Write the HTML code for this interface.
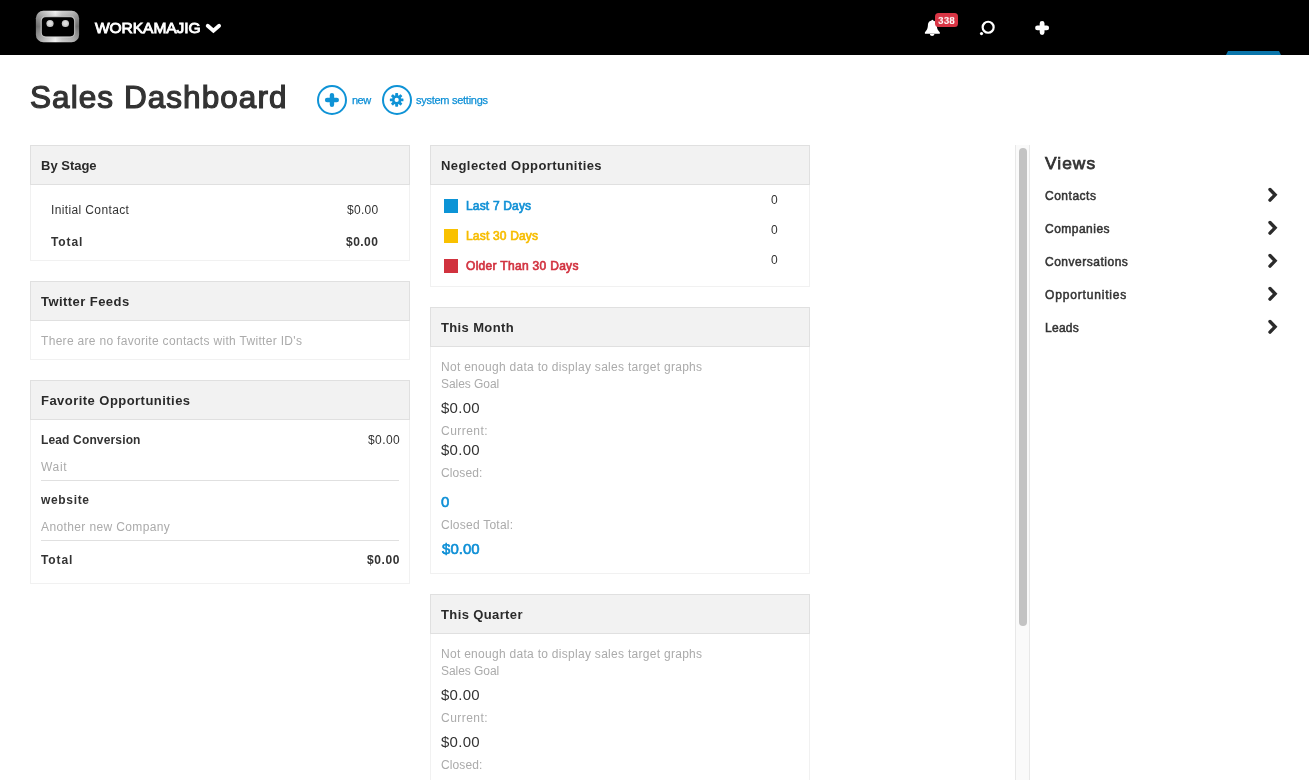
<!DOCTYPE html>
<html>
<head>
<meta charset="utf-8">
<title>Sales Dashboard</title>
<style>
*{box-sizing:border-box;margin:0;padding:0}
html,body{width:1309px;height:780px;overflow:hidden;background:#fff}
body{font-family:"Liberation Sans",sans-serif;font-size:12px;color:#333;position:relative}
.abs{position:absolute;white-space:nowrap}
#topbar{position:absolute;left:0;top:0;width:1309px;height:55px;background:#000}
.circ{position:absolute;width:30px;height:30px;border:2px solid #0f93d6;border-radius:50%}
.panel{position:absolute;width:380px}
.ph{position:absolute;left:0;top:0;width:380px;height:40px;background:#f2f2f2;border:1px solid #e0e0e0}
.pb{position:absolute;left:0;top:40px;width:380px;border:1px solid #f1f1f1;border-top:none}
.t{position:absolute;white-space:nowrap;font-family:"Liberation Sans",sans-serif;will-change:transform}
.hr{position:absolute;height:1px;background:#e0e0e0}
.chev{position:absolute;left:1266px;width:13px;height:16px}
.sq{position:absolute;left:444px;width:14px;height:14px}
</style>
</head>
<body>
<div id="topbar"></div>
<!-- logo -->
<svg class="abs" style="left:30px;top:5px" width="56" height="44" viewBox="0 0 56 44">
<defs>
<linearGradient id="lg1" x1="0" y1="0" x2="1" y2="0">
<stop offset="0" stop-color="#8a8a8a"/><stop offset="0.18" stop-color="#b2b2b2"/><stop offset="0.45" stop-color="#f2f2f2"/><stop offset="0.6" stop-color="#c4c4c4"/><stop offset="0.85" stop-color="#a8a8a8"/><stop offset="1" stop-color="#888888"/>
</linearGradient>
<linearGradient id="lg2" x1="0" y1="0" x2="0" y2="1">
<stop offset="0" stop-color="#ffffff" stop-opacity="0.25"/><stop offset="0.5" stop-color="#000000" stop-opacity="0.22"/><stop offset="1" stop-color="#ffffff" stop-opacity="0.15"/>
</linearGradient>
</defs>
<rect x="5.9" y="5.7" width="43.2" height="31.5" rx="7.5" ry="7.5" fill="url(#lg1)"/>
<rect x="5.9" y="5.7" width="43.2" height="31.5" rx="7.5" ry="7.5" fill="url(#lg2)"/>
<rect x="11.3" y="11.6" width="33.3" height="20.3" rx="4.4" ry="4.4" fill="#000" stroke="#e4e4e4" stroke-opacity="0.7" stroke-width="1.1"/>
<circle cx="20" cy="18.5" r="3.6" fill="#c8c8c8"/>
<circle cx="20" cy="18.3" r="2.2" fill="#dedede"/>
<circle cx="35.4" cy="18.5" r="3.6" fill="#c8c8c8"/>
<circle cx="35.4" cy="18.3" r="2.2" fill="#dedede"/>
</svg>
<svg class="abs" style="left:205px;top:22px" width="18" height="13" viewBox="0 0 18 13"><path d="M2.7 3.7 L8.4 8.7 L14.1 3.7" fill="none" stroke="#fff" stroke-width="3.8" stroke-linecap="round" stroke-linejoin="miter"/></svg>
<!-- bell -->
<svg class="abs" style="left:920px;top:16px" width="26" height="24" viewBox="0 0 26 24"><path d="M12.35 3.7 C11.9 3.7 11.6 4.0 11.5 4.4 C10.0 4.8 8.3 5.8 8.0 8.0 C7.8 11.5 7.6 13.6 4.9 16.2 L4.9 17.7 L19.8 17.7 L19.8 16.2 C17.1 13.6 16.9 11.5 16.7 8.0 C16.4 5.8 14.7 4.8 13.2 4.4 C13.1 4.0 12.8 3.7 12.35 3.7 Z M9.9 18.1 C9.9 19.4 11 20.1 12.1 20.1 C13.3 20.1 14.4 19.4 14.4 18.1 Z" fill="#fff"/></svg>
<div class="abs" style="left:935px;top:13px;width:23px;height:14px;border-radius:3.5px;background:#d93545"></div>
<div class="t" style="left:938px;top:14px;font-size:10px;line-height:14px;font-weight:bold;color:#fff;letter-spacing:0.1px;transform:scaleY(0.9);transform-origin:0 10.5px">338</div>
<!-- search -->
<svg class="abs" style="left:976px;top:16px" width="24" height="24" viewBox="0 0 24 24"><circle cx="12.15" cy="11.25" r="5.5" fill="none" stroke="#fff" stroke-width="2.2"/><circle cx="5.5" cy="17.6" r="1.6" fill="#fff"/></svg>
<!-- plus -->
<svg class="abs" style="left:1032px;top:18px" width="20" height="20" viewBox="0 0 20 20"><path d="M10.1 5.3 V14.5 M5.5 9.9 H14.7" stroke="#fff" stroke-width="4.8" stroke-linecap="round" fill="none"/></svg>
<!-- blue tab -->
<svg class="abs" style="left:1224px;top:50px" width="60" height="5" viewBox="0 0 60 5"><path d="M2 5 L4 1 L55 1 L57 5 Z" fill="#0a75aa"/></svg>

<div class="circ" style="left:317px;top:85px"></div>
<svg class="abs" style="left:322px;top:90px" width="20" height="20" viewBox="0 0 20 20"><path d="M9.95 5.1 V14.8 M5.1 9.95 H14.8" stroke="#0f93d6" stroke-width="4.4" stroke-linecap="round" fill="none"/></svg>
<div class="circ" style="left:382px;top:85px"></div>
<svg class="abs" style="left:387px;top:90px" width="20" height="20" viewBox="0 0 20 20">
<g transform="translate(9.65 9.9)" fill="#0f93d6">
<circle r="4.6"/>
<rect x="-1.45" y="-6.8" width="2.9" height="13.6" rx="0.6"/><rect x="-1.45" y="-6.8" width="2.9" height="13.6" rx="0.6" transform="rotate(45)"/><rect x="-1.45" y="-6.8" width="2.9" height="13.6" rx="0.6" transform="rotate(90)"/><rect x="-1.45" y="-6.8" width="2.9" height="13.6" rx="0.6" transform="rotate(135)"/>
<circle r="2.1" fill="#fff"/>
</g></svg>

<!-- LEFT COLUMN -->
<div class="panel" style="left:30px;top:145px"><div class="ph"></div><div class="pb" style="height:76px"></div></div>
<div class="panel" style="left:30px;top:281px"><div class="ph"></div><div class="pb" style="height:39px"></div></div>
<div class="panel" style="left:30px;top:380px"><div class="ph"></div><div class="pb" style="height:164px"></div></div>
<div class="hr" style="left:41px;top:480px;width:358px"></div>
<div class="hr" style="left:41px;top:540px;width:358px"></div>

<!-- MIDDLE COLUMN -->
<div class="panel" style="left:430px;top:145px"><div class="ph"></div><div class="pb" style="height:102px"></div></div>
<div class="sq" style="top:199px;background:#0c94d6"></div>
<div class="sq" style="top:229px;background:#f9c100"></div>
<div class="sq" style="top:259px;background:#d1323e"></div>
<div class="panel" style="left:430px;top:307px"><div class="ph"></div><div class="pb" style="height:227px"></div></div>
<div class="panel" style="left:430px;top:594px"><div class="ph"></div><div class="pb" style="height:160px;border-bottom:none"></div></div>

<!-- SCROLLBAR -->
<div class="abs" style="left:1015px;top:145px;width:15px;height:635px;background:#fafafa;border-left:1px solid #e8e8e8;border-right:1px solid #e8e8e8"></div>
<div class="abs" style="left:1019px;top:148px;width:8px;height:478px;border-radius:4px;background:#c3c3c3"></div>

<!-- VIEWS chevrons -->
<svg class="chev" style="top:187px" viewBox="0 0 13 16"><path d="M4 2.55 L9.1 7.85 L4 13.15" fill="none" stroke="#2b2b2b" stroke-width="3.4" stroke-linecap="round"/></svg>
<svg class="chev" style="top:220px" viewBox="0 0 13 16"><path d="M4 2.55 L9.1 7.85 L4 13.15" fill="none" stroke="#2b2b2b" stroke-width="3.4" stroke-linecap="round"/></svg>
<svg class="chev" style="top:253px" viewBox="0 0 13 16"><path d="M4 2.55 L9.1 7.85 L4 13.15" fill="none" stroke="#2b2b2b" stroke-width="3.4" stroke-linecap="round"/></svg>
<svg class="chev" style="top:286px" viewBox="0 0 13 16"><path d="M4 2.55 L9.1 7.85 L4 13.15" fill="none" stroke="#2b2b2b" stroke-width="3.4" stroke-linecap="round"/></svg>
<svg class="chev" style="top:319px" viewBox="0 0 13 16"><path d="M4 2.55 L9.1 7.85 L4 13.15" fill="none" stroke="#2b2b2b" stroke-width="3.4" stroke-linecap="round"/></svg>

<!-- TEXT -->
<div class="t" id="brand" style="left:95px;top:17px;font-size:15.55px;line-height:22px;-webkit-text-stroke:0.9px #ffffff;color:#ffffff;letter-spacing:-0.071px">WORKAMAJIG</div>
<div class="t" id="title" style="left:30px;top:75px;font-size:31.52px;line-height:44px;-webkit-text-stroke:1.2px #333333;color:#333333;letter-spacing:1.052px">Sales Dashboard</div>
<div class="t" id="lnew" style="left:352px;top:93px;font-size:11px;line-height:15px;-webkit-text-stroke:0.25px #0d8fd6;color:#0d8fd6;letter-spacing:-0.504px">new</div>
<div class="t" id="lsys" style="left:416px;top:93px;font-size:11px;line-height:15px;-webkit-text-stroke:0.25px #0d8fd6;color:#0d8fd6;letter-spacing:-0.272px">system settings</div>
<div class="t" id="h1" style="left:41px;top:157px;font-size:13px;line-height:18px;font-weight:bold;color:#2a2a2a;letter-spacing:-0.004px">By Stage</div>
<div class="t" id="a1" style="left:51px;top:202px;font-size:12px;line-height:17px;color:#333333;letter-spacing:0.370px">Initial Contact</div>
<div class="t" id="a2" style="left:347px;top:202px;font-size:12px;line-height:17px;color:#333333;letter-spacing:0.302px">$0.00</div>
<div class="t" id="a3" style="left:51px;top:234px;font-size:12px;line-height:17px;font-weight:bold;color:#333333;letter-spacing:0.870px">Total</div>
<div class="t" id="a4" style="left:346px;top:234px;font-size:12px;line-height:17px;font-weight:bold;color:#333333;letter-spacing:0.480px">$0.00</div>
<div class="t" id="h2" style="left:41px;top:293px;font-size:13px;line-height:18px;font-weight:bold;color:#2a2a2a;letter-spacing:0.442px">Twitter Feeds</div>
<div class="t" id="b1" style="left:41px;top:333px;font-size:12px;line-height:17px;color:#ababab;letter-spacing:0.313px">There are no favorite contacts with Twitter ID's</div>
<div class="t" id="h3" style="left:41px;top:392px;font-size:13px;line-height:18px;font-weight:bold;color:#2a2a2a;letter-spacing:0.460px">Favorite Opportunities</div>
<div class="t" id="c1" style="left:41px;top:432px;font-size:12px;line-height:17px;font-weight:bold;color:#333333;letter-spacing:0.149px">Lead Conversion</div>
<div class="t" id="c2" style="left:368px;top:432px;font-size:12px;line-height:17px;color:#333333;letter-spacing:0.427px">$0.00</div>
<div class="t" id="c3" style="left:41px;top:459px;font-size:12px;line-height:17px;color:#ababab;letter-spacing:0.664px">Wait</div>
<div class="t" id="c4" style="left:41px;top:492px;font-size:12px;line-height:17px;font-weight:bold;color:#333333;letter-spacing:0.661px">website</div>
<div class="t" id="c5" style="left:41px;top:519px;font-size:12px;line-height:17px;color:#ababab;letter-spacing:0.377px">Another new Company</div>
<div class="t" id="c6" style="left:41px;top:552px;font-size:12px;line-height:17px;font-weight:bold;color:#333333;letter-spacing:0.920px">Total</div>
<div class="t" id="c7" style="left:367px;top:552px;font-size:12px;line-height:17px;font-weight:bold;color:#333333;letter-spacing:0.605px">$0.00</div>
<div class="t" id="h4" style="left:441px;top:157px;font-size:13px;line-height:18px;font-weight:bold;color:#2a2a2a;letter-spacing:0.438px">Neglected Opportunities</div>
<div class="t" id="d1" style="left:466px;top:198px;font-size:12px;line-height:17px;-webkit-text-stroke:0.65px #1291d6;color:#1291d6;letter-spacing:0.173px">Last 7 Days</div>
<div class="t" id="d2" style="left:466px;top:228px;font-size:12px;line-height:17px;-webkit-text-stroke:0.65px #f7bd00;color:#f7bd00;letter-spacing:0.181px">Last 30 Days</div>
<div class="t" id="d3" style="left:466px;top:258px;font-size:12px;line-height:17px;-webkit-text-stroke:0.65px #d23340;color:#d23340;letter-spacing:0.309px">Older Than 30 Days</div>
<div class="t" id="d4" style="left:771px;top:192px;font-size:12px;line-height:17px;color:#333333;letter-spacing:0.000px">0</div>
<div class="t" id="d5" style="left:771px;top:222px;font-size:12px;line-height:17px;color:#333333;letter-spacing:0.000px">0</div>
<div class="t" id="d6" style="left:771px;top:252px;font-size:12px;line-height:17px;color:#333333;letter-spacing:0.000px">0</div>
<div class="t" id="h5" style="left:441px;top:319px;font-size:13px;line-height:18px;font-weight:bold;color:#2a2a2a;letter-spacing:0.367px">This Month</div>
<div class="t" id="e1" style="left:441px;top:359px;font-size:12px;line-height:17px;color:#ababab;letter-spacing:0.287px">Not enough data to display sales target graphs</div>
<div class="t" id="e2" style="left:441px;top:376px;font-size:12px;line-height:17px;color:#ababab;letter-spacing:-0.055px">Sales Goal</div>
<div class="t" id="e3" style="left:441px;top:397px;font-size:15px;line-height:21px;color:#333333;letter-spacing:0.271px">$0.00</div>
<div class="t" id="e4" style="left:441px;top:423px;font-size:12px;line-height:17px;color:#ababab;letter-spacing:0.473px">Current:</div>
<div class="t" id="e5" style="left:441px;top:439px;font-size:15px;line-height:21px;color:#333333;letter-spacing:0.271px">$0.00</div>
<div class="t" id="e6" style="left:441px;top:465px;font-size:12px;line-height:17px;color:#ababab;letter-spacing:0.112px">Closed:</div>
<div class="t" id="e7" style="left:441px;top:491px;font-size:15px;line-height:21px;-webkit-text-stroke:0.6px #0d8fd6;color:#0d8fd6;letter-spacing:0.000px">0</div>
<div class="t" id="e8" style="left:441px;top:517px;font-size:12px;line-height:17px;color:#ababab;letter-spacing:0.241px">Closed Total:</div>
<div class="t" id="e9" style="left:442px;top:538px;font-size:15px;line-height:21px;-webkit-text-stroke:0.6px #0d8fd6;color:#0d8fd6;letter-spacing:0.045px">$0.00</div>
<div class="t" id="h6" style="left:441px;top:606px;font-size:13px;line-height:18px;font-weight:bold;color:#2a2a2a;letter-spacing:0.378px">This Quarter</div>
<div class="t" id="f1" style="left:441px;top:646px;font-size:12px;line-height:17px;color:#ababab;letter-spacing:0.287px">Not enough data to display sales target graphs</div>
<div class="t" id="f2" style="left:441px;top:663px;font-size:12px;line-height:17px;color:#ababab;letter-spacing:-0.055px">Sales Goal</div>
<div class="t" id="f3" style="left:441px;top:684px;font-size:15px;line-height:21px;color:#333333;letter-spacing:0.271px">$0.00</div>
<div class="t" id="f4" style="left:441px;top:710px;font-size:12px;line-height:17px;color:#ababab;letter-spacing:0.473px">Current:</div>
<div class="t" id="f5" style="left:441px;top:731px;font-size:15px;line-height:21px;color:#333333;letter-spacing:0.271px">$0.00</div>
<div class="t" id="f6" style="left:441px;top:757px;font-size:12px;line-height:17px;color:#ababab;letter-spacing:0.112px">Closed:</div>
<div class="t" id="v0" style="left:1045px;top:151px;font-size:17.37px;line-height:24px;-webkit-text-stroke:0.75px #333333;color:#333333;letter-spacing:1.031px">Views</div>
<div class="t" id="v1" style="left:1045px;top:188px;font-size:12px;line-height:17px;-webkit-text-stroke:0.5px #333333;color:#333333;letter-spacing:0.516px">Contacts</div>
<div class="t" id="v2" style="left:1045px;top:221px;font-size:12px;line-height:17px;-webkit-text-stroke:0.5px #333333;color:#333333;letter-spacing:0.481px">Companies</div>
<div class="t" id="v3" style="left:1045px;top:254px;font-size:12px;line-height:17px;-webkit-text-stroke:0.5px #333333;color:#333333;letter-spacing:0.512px">Conversations</div>
<div class="t" id="v4" style="left:1045px;top:287px;font-size:12px;line-height:17px;-webkit-text-stroke:0.5px #333333;color:#333333;letter-spacing:0.832px">Opportunities</div>
<div class="t" id="v5" style="left:1045px;top:320px;font-size:12px;line-height:17px;-webkit-text-stroke:0.5px #333333;color:#333333;letter-spacing:0.270px">Leads</div>
</body>
</html>
